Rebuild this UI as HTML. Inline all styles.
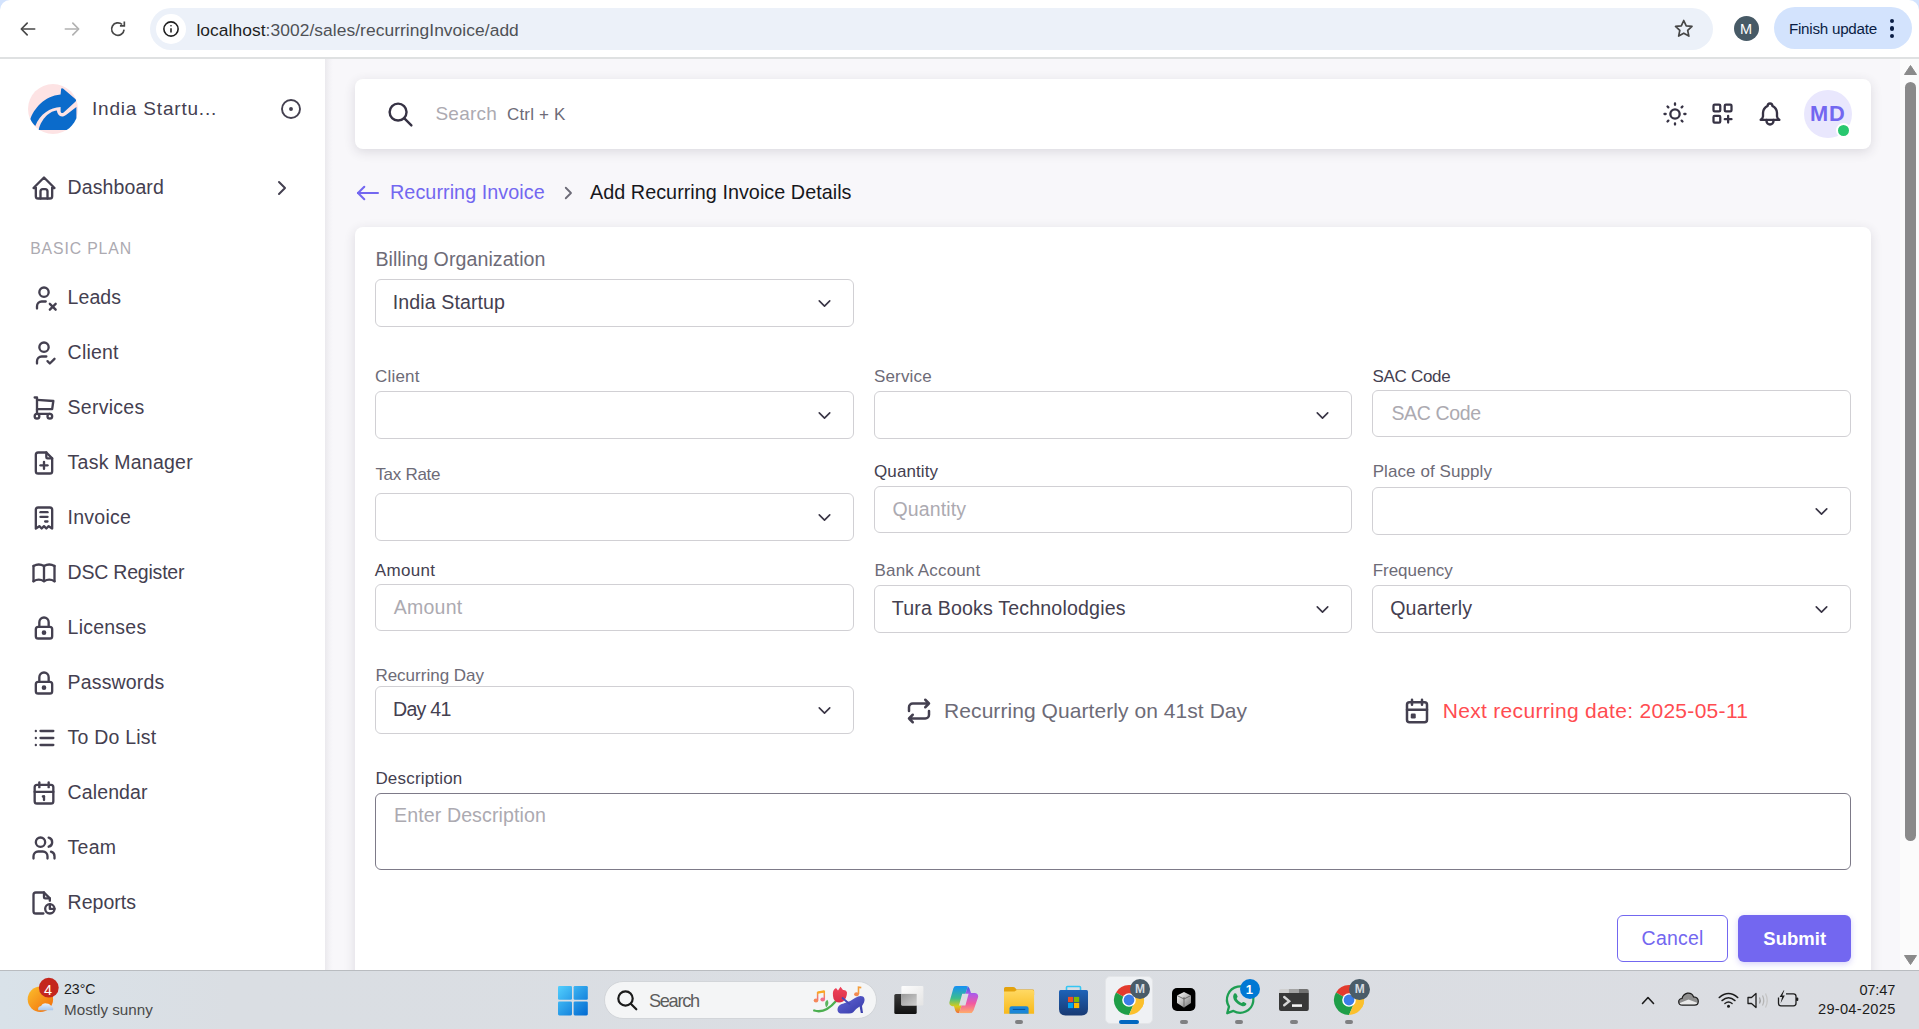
<!DOCTYPE html>
<html><head><meta charset="utf-8"><title>Recurring Invoice</title>
<style>
html,body{margin:0;padding:0;width:1919px;height:1029px;overflow:hidden;background:#fff;font-family:"Liberation Sans",sans-serif;}
.a{position:absolute;box-sizing:border-box;}
.t{position:absolute;white-space:nowrap;font-family:"Liberation Sans",sans-serif;}
svg.a{overflow:visible}
</style></head><body>

<div class="a" style="left:0px;top:0px;width:1919px;height:57px;background:#d3e3fd;"></div>
<div class="a" style="left:0px;top:0px;width:1919px;height:57px;background:#fff;border-radius:10px 10px 0 0;"></div>
<div class="a" style="left:0px;top:57px;width:1919px;height:2px;background:#dfe1e2;"></div>
<svg class="a" style="left:18.00px;top:18.50px" width="20.00" height="20.00" viewBox="0 0 24 24" fill="none" stroke="#474747" stroke-width="2" stroke-linecap="round" stroke-linejoin="round" ><path d="M20 12H5"/><path d="M11 5l-7 7 7 7"/></svg>
<svg class="a" style="left:62.00px;top:18.50px" width="20.00" height="20.00" viewBox="0 0 24 24" fill="none" stroke="#b1b1b1" stroke-width="2" stroke-linecap="round" stroke-linejoin="round" ><path d="M4 12h15"/><path d="M13 5l7 7-7 7"/></svg>
<svg class="a" style="left:107.50px;top:18.50px" width="20.00" height="20.00" viewBox="0 0 24 24" fill="none" stroke="#474747" stroke-width="2" stroke-linecap="round" stroke-linejoin="round" ><path stroke-linecap="butt" d="M19.3 12.8a7.5 7.5 0 1 1-2.4-6.2"/><path stroke-linecap="butt" stroke-linejoin="miter" d="M19.6 3v5.3h-5.3"/></svg>
<div class="a" style="left:150px;top:8px;width:1563px;height:42px;background:#ecf1f9;border-radius:21px;"></div>
<div class="a" style="left:156px;top:14px;width:30px;height:30px;border-radius:15px;background:#fff;"></div>
<svg class="a" style="left:162.00px;top:20.00px" width="18.00" height="18.00" viewBox="0 0 24 24" fill="none" stroke="#1f1f1f" stroke-width="2.1" stroke-linecap="round" stroke-linejoin="round" ><circle cx="12" cy="12" r="9.5"/><path d="M12 11v5.6" stroke-linecap="butt"/><circle cx="12" cy="7.7" r="1.1" fill="#1f1f1f" stroke="none"/></svg>
<div class="t" style="left:196.40px;top:22px;font-size:17.40px;line-height:17.40px;color:#1f1f1f;letter-spacing:0.060px;">localhost<span style="color:#4f5156">:3002/sales/recurringInvoice/add</span></div>
<svg class="a" style="left:1672.85px;top:18.25px" width="21.50" height="21.50" viewBox="0 0 24 24" fill="none" stroke="#474747" stroke-width="1.9" stroke-linecap="round" stroke-linejoin="round" ><path d="M12 2.8l2.75 5.9 6.45.75-4.8 4.4 1.3 6.35L12 16.95l-5.7 3.25 1.3-6.35-4.8-4.4 6.45-.75z"/></svg>
<div class="a" style="left:1734px;top:16px;width:25px;height:25px;border-radius:50%;background:#475a66;"></div>
<div class="t" style="left:1739.90px;top:22px;font-size:14.50px;line-height:14.50px;color:#fff;">M</div>
<div class="a" style="left:1774px;top:7px;width:138px;height:42px;background:#d3e3fd;border-radius:21px;"></div>
<div class="t" style="left:1788.90px;top:21px;font-size:15.20px;line-height:15.20px;color:#0a1d44;letter-spacing:-0.242px;">Finish update</div>
<div class="a" style="left:1889.8px;top:18.9px;width:4.2px;height:4.2px;border-radius:50%;background:#0a1d44;"></div>
<div class="a" style="left:1889.8px;top:26.4px;width:4.2px;height:4.2px;border-radius:50%;background:#0a1d44;"></div>
<div class="a" style="left:1889.8px;top:33.9px;width:4.2px;height:4.2px;border-radius:50%;background:#0a1d44;"></div>
<div class="a" style="left:0px;top:59px;width:325px;height:911px;background:#fff;"></div>
<div class="a" style="left:325px;top:59px;width:1575px;height:911px;background:#f8f7fa;"></div>
<div class="a" style="left:325px;top:59px;width:8px;height:911px;background:linear-gradient(to right, rgba(47,43,61,0.065), rgba(47,43,61,0.02) 60%, rgba(47,43,61,0));"></div>
<div class="a" style="left:1900px;top:59px;width:19px;height:911px;background:#fbfbfb;"></div>
<svg class="a" style="left:1904px;top:65px" width="13" height="10"><path d="M6.5 0.5L12.5 9.5H0.5z" fill="#8a8a8a" stroke="#8a8a8a" stroke-linejoin="round"/></svg>
<div class="a" style="left:1905px;top:82px;width:11px;height:759px;background:#8a8a8a;border-radius:5.5px;"></div>
<svg class="a" style="left:1904px;top:955px" width="13" height="10"><path d="M0.5 0.5H12.5L6.5 9.5z" fill="#8a8a8a" stroke="#8a8a8a" stroke-linejoin="round"/></svg>
<svg class="a" style="left:27.8px;top:83.6px" width="50" height="50" viewBox="0 0 50 50">
<circle cx="25" cy="25" r="25" fill="#fde3e4"/>
<path d="M2.4 34.9 C6 25 16 12 32.6 10.5 L33.1 5.2 Q33.4 3.6 35 4.6 L47.6 15.2 Q48.6 16.4 47.6 17.6 L35.6 28.6 Q33 30 32.6 27.6 L32.6 23 C22 23.5 12 30 7.3 42 C5 39.5 3.2 37 2.4 34.9z" fill="#0b6bcb"/>
<path d="M10.8 45.8 C12 38 20 27 28.8 26.5 C29.5 30 31 32.3 34 32.5 C36 32.6 37 32 48.4 23 L48.4 34.2 C46 40 42 44 38.6 46 L10.8 46z" fill="#0b6bcb"/>
</svg>
<div class="t" style="left:92.00px;top:99px;font-size:19.00px;line-height:19.00px;color:#444050;letter-spacing:0.807px;">India Startu...</div>
<svg class="a" style="left:279.00px;top:97.40px" width="24.00" height="24.00" viewBox="0 0 24 24" fill="none" stroke="#444050" stroke-width="1.9" stroke-linecap="round" stroke-linejoin="round" ><circle cx="12" cy="12" r="9"/><circle cx="12" cy="12" r="1" fill="#444050"/></svg>
<svg class="a" style="left:30.00px;top:174.00px" width="28.00" height="28.00" viewBox="0 0 24 24" fill="none" stroke="#444050" stroke-width="2" stroke-linecap="round" stroke-linejoin="round" ><path d="M5 12H3l9-9 9 9h-2"/><path d="M5 12v7a2 2 0 0 0 2 2h10a2 2 0 0 0 2-2v-7"/><path d="M9 21v-6a2 2 0 0 1 2-2h2a2 2 0 0 1 2 2v6"/></svg>
<div class="t" style="left:67.60px;top:178px;font-size:19.50px;line-height:19.50px;color:#444050;letter-spacing:0.100px;">Dashboard</div>
<svg class="a" style="left:30.00px;top:284.00px" width="28.00" height="28.00" viewBox="0 0 24 24" fill="none" stroke="#444050" stroke-width="2" stroke-linecap="round" stroke-linejoin="round" ><path d="M8 7a4 4 0 1 0 8 0a4 4 0 0 0-8 0"/><path d="M6 21v-2a4 4 0 0 1 4-4h3.5"/><path d="M22 22l-5-5"/><path d="M17 22l5-5"/></svg>
<div class="t" style="left:67.60px;top:288px;font-size:19.50px;line-height:19.50px;color:#444050;letter-spacing:0.075px;">Leads</div>
<svg class="a" style="left:30.00px;top:339.00px" width="28.00" height="28.00" viewBox="0 0 24 24" fill="none" stroke="#444050" stroke-width="2" stroke-linecap="round" stroke-linejoin="round" ><path d="M8 7a4 4 0 1 0 8 0a4 4 0 0 0-8 0"/><path d="M6 21v-2a4 4 0 0 1 4-4h4"/><path d="M15 19l2 2 4-4"/></svg>
<div class="t" style="left:67.60px;top:343px;font-size:19.50px;line-height:19.50px;color:#444050;letter-spacing:0.200px;">Client</div>
<svg class="a" style="left:30.00px;top:394.00px" width="28.00" height="28.00" viewBox="0 0 24 24" fill="none" stroke="#444050" stroke-width="2" stroke-linecap="round" stroke-linejoin="round" ><path d="M6 19m-2 0a2 2 0 1 0 4 0a2 2 0 1 0-4 0"/><path d="M17 19m-2 0a2 2 0 1 0 4 0a2 2 0 1 0-4 0"/><path d="M17 17H6V3H4"/><path d="M6 5l14 1-1 7H6"/></svg>
<div class="t" style="left:67.60px;top:398px;font-size:19.50px;line-height:19.50px;color:#444050;letter-spacing:0.257px;">Services</div>
<svg class="a" style="left:30.00px;top:449.00px" width="28.00" height="28.00" viewBox="0 0 24 24" fill="none" stroke="#444050" stroke-width="2" stroke-linecap="round" stroke-linejoin="round" ><path d="M14 3v4a1 1 0 0 0 1 1h4"/><path d="M17 21H7a2 2 0 0 1-2-2V5a2 2 0 0 1 2-2h7l5 5v11a2 2 0 0 1-2 2z"/><path d="M12 11v6"/><path d="M9 14h6"/></svg>
<div class="t" style="left:67.60px;top:453px;font-size:19.50px;line-height:19.50px;color:#444050;letter-spacing:0.236px;">Task Manager</div>
<svg class="a" style="left:30.00px;top:504.00px" width="28.00" height="28.00" viewBox="0 0 24 24" fill="none" stroke="#444050" stroke-width="2" stroke-linecap="round" stroke-linejoin="round" ><path d="M5 21V5a2 2 0 0 1 2-2h10a2 2 0 0 1 2 2v16l-3-2-2 2-2-2-2 2-2-2-3 2"/><path d="M9 7h6"/><path d="M9 11h6"/><path d="M13 15h2"/></svg>
<div class="t" style="left:67.60px;top:508px;font-size:19.50px;line-height:19.50px;color:#444050;letter-spacing:0.233px;">Invoice</div>
<svg class="a" style="left:30.00px;top:559.00px" width="28.00" height="28.00" viewBox="0 0 24 24" fill="none" stroke="#444050" stroke-width="2" stroke-linecap="round" stroke-linejoin="round" ><path d="M3 19a9 9 0 0 1 9 0a9 9 0 0 1 9 0"/><path d="M3 6a9 9 0 0 1 9 0a9 9 0 0 1 9 0"/><path d="M3 6v13"/><path d="M12 6v13"/><path d="M21 6v13"/></svg>
<div class="t" style="left:67.60px;top:563px;font-size:19.50px;line-height:19.50px;color:#444050;letter-spacing:-0.209px;">DSC Register</div>
<svg class="a" style="left:30.00px;top:614.00px" width="28.00" height="28.00" viewBox="0 0 24 24" fill="none" stroke="#444050" stroke-width="2" stroke-linecap="round" stroke-linejoin="round" ><path d="M5 13a2 2 0 0 1 2-2h10a2 2 0 0 1 2 2v6a2 2 0 0 1-2 2H7a2 2 0 0 1-2-2v-6z"/><path d="M11 16a1 1 0 1 0 2 0a1 1 0 0 0-2 0"/><path d="M8 11V7a4 4 0 1 1 8 0v4"/></svg>
<div class="t" style="left:67.60px;top:618px;font-size:19.50px;line-height:19.50px;color:#444050;letter-spacing:0.229px;">Licenses</div>
<svg class="a" style="left:30.00px;top:669.00px" width="28.00" height="28.00" viewBox="0 0 24 24" fill="none" stroke="#444050" stroke-width="2" stroke-linecap="round" stroke-linejoin="round" ><path d="M5 13a2 2 0 0 1 2-2h10a2 2 0 0 1 2 2v6a2 2 0 0 1-2 2H7a2 2 0 0 1-2-2v-6z"/><path d="M11 16a1 1 0 1 0 2 0a1 1 0 0 0-2 0"/><path d="M8 11V7a4 4 0 1 1 8 0v4"/></svg>
<div class="t" style="left:67.60px;top:673px;font-size:19.50px;line-height:19.50px;color:#444050;letter-spacing:0.162px;">Passwords</div>
<svg class="a" style="left:30.00px;top:724.00px" width="28.00" height="28.00" viewBox="0 0 24 24" fill="none" stroke="#444050" stroke-width="2" stroke-linecap="round" stroke-linejoin="round" ><path d="M9 6h11"/><path d="M9 12h11"/><path d="M9 18h11"/><path d="M5 6v.01"/><path d="M5 12v.01"/><path d="M5 18v.01"/></svg>
<div class="t" style="left:67.60px;top:728px;font-size:19.50px;line-height:19.50px;color:#444050;letter-spacing:0.200px;">To Do List</div>
<svg class="a" style="left:30.00px;top:779.00px" width="28.00" height="28.00" viewBox="0 0 24 24" fill="none" stroke="#444050" stroke-width="2" stroke-linecap="round" stroke-linejoin="round" ><path d="M4 7a2 2 0 0 1 2-2h12a2 2 0 0 1 2 2v12a2 2 0 0 1-2 2H6a2 2 0 0 1-2-2V7z"/><path d="M16 3v4"/><path d="M8 3v4"/><path d="M4 11h16"/><path d="M11 15h1"/><path d="M12 15v3"/></svg>
<div class="t" style="left:67.60px;top:783px;font-size:19.50px;line-height:19.50px;color:#444050;letter-spacing:0.114px;">Calendar</div>
<svg class="a" style="left:30.00px;top:834.00px" width="28.00" height="28.00" viewBox="0 0 24 24" fill="none" stroke="#444050" stroke-width="2" stroke-linecap="round" stroke-linejoin="round" ><path d="M9 7m-4 0a4 4 0 1 0 8 0a4 4 0 1 0-8 0"/><path d="M3 21v-2a4 4 0 0 1 4-4h4a4 4 0 0 1 4 4v2"/><path d="M16 3.13a4 4 0 0 1 0 7.75"/><path d="M21 21v-2a4 4 0 0 0-3-3.85"/></svg>
<div class="t" style="left:67.60px;top:838px;font-size:19.50px;line-height:19.50px;color:#444050;letter-spacing:0.233px;">Team</div>
<svg class="a" style="left:30.00px;top:889.00px" width="28.00" height="28.00" viewBox="0 0 24 24" fill="none" stroke="#444050" stroke-width="2" stroke-linecap="round" stroke-linejoin="round" ><path d="M17 17m-4 0a4 4 0 1 0 8 0a4 4 0 1 0-8 0"/><path d="M17 13v4h4"/><path d="M12 3v4a1 1 0 0 0 1 1h4"/><path d="M11.5 21H5a2 2 0 0 1-2-2V5a2 2 0 0 1 2-2h7l5 5v2"/></svg>
<div class="t" style="left:67.60px;top:893px;font-size:19.50px;line-height:19.50px;color:#444050;letter-spacing:0.033px;">Reports</div>
<svg class="a" style="left:269.50px;top:175.50px" width="24.00" height="24.00" viewBox="0 0 24 24" fill="none" stroke="#444050" stroke-width="2" stroke-linecap="round" stroke-linejoin="round" ><path d="M9 6l6 6-6 6"/></svg>
<div class="t" style="left:30.20px;top:241px;font-size:15.80px;line-height:15.80px;color:#acaab1;letter-spacing:0.867px;">BASIC PLAN</div>
<div class="a" style="left:355px;top:79px;width:1516px;height:70px;background:#fff;border-radius:8px;box-shadow:0 3px 12px rgba(47,43,61,0.14);"></div>
<svg class="a" style="left:385.50px;top:99.50px" width="29.00" height="29.00" viewBox="0 0 24 24" fill="none" stroke="#363244" stroke-width="2" stroke-linecap="round" stroke-linejoin="round" ><path d="M10 10m-7 0a7 7 0 1 0 14 0a7 7 0 1 0-14 0"/><path d="M21 21l-6-6"/></svg>
<div class="t" style="left:435.40px;top:104px;font-size:19.00px;line-height:19.00px;color:#acaab1;letter-spacing:0.260px;">Search</div>
<div class="t" style="left:507.00px;top:106px;font-size:17.00px;line-height:17.00px;color:#6d6b77;letter-spacing:0.157px;">Ctrl + K</div>
<svg class="a" style="left:1661.00px;top:99.80px" width="28.00" height="28.00" viewBox="0 0 24 24" fill="none" stroke="#363244" stroke-width="2" stroke-linecap="round" stroke-linejoin="round" ><path d="M12 12m-4 0a4 4 0 1 0 8 0a4 4 0 1 0-8 0"/><path d="M3 12h1m8-9v1m8 8h1m-9 8v1M5.6 5.6l.7.7m12.1-.7l-.7.7m0 11.4l.7.7m-12.1-.7l-.7.7"/></svg>
<svg class="a" style="left:1708.90px;top:100.10px" width="27.00" height="27.00" viewBox="0 0 24 24" fill="none" stroke="#363244" stroke-width="2" stroke-linecap="round" stroke-linejoin="round" ><path d="M4 5a1 1 0 0 1 1-1h4a1 1 0 0 1 1 1v4a1 1 0 0 1-1 1H5a1 1 0 0 1-1-1z"/><path d="M14 5a1 1 0 0 1 1-1h4a1 1 0 0 1 1 1v4a1 1 0 0 1-1 1h-4a1 1 0 0 1-1-1z"/><path d="M4 15a1 1 0 0 1 1-1h4a1 1 0 0 1 1 1v4a1 1 0 0 1-1 1H5a1 1 0 0 1-1-1z"/><path d="M14 17h6m-3-3v6"/></svg>
<svg class="a" style="left:1756.00px;top:99.80px" width="28.00" height="28.00" viewBox="0 0 24 24" fill="none" stroke="#363244" stroke-width="2" stroke-linecap="round" stroke-linejoin="round" ><path d="M10 5a2 2 0 1 1 4 0a7 7 0 0 1 4 6v3a4 4 0 0 0 2 3H4a4 4 0 0 0 2-3v-3a7 7 0 0 1 4-6"/><path d="M9 17v1a3 3 0 0 0 6 0v-1"/></svg>
<div class="a" style="left:1803.5px;top:89.7px;width:48px;height:48px;border-radius:50%;background:#e9e7fd;"></div>
<div class="t" style="left:1810.00px;top:103px;font-size:21.80px;line-height:21.80px;color:#7367f0;font-weight:700;letter-spacing:0.800px;">MD</div>
<div class="a" style="left:1836.3px;top:123.4px;width:15px;height:15px;border-radius:50%;background:#28c76f;border:2.2px solid #fff;"></div>
<svg class="a" style="left:355.50px;top:180.80px" width="24.00" height="24.00" viewBox="0 0 24 24" fill="none" stroke="#7367f0" stroke-width="2" stroke-linecap="round" stroke-linejoin="round" ><path d="M2 12h20"/><path d="M2 12l6.3 6.3"/><path d="M2 12l6.3-6.3"/></svg>
<div class="t" style="left:390.00px;top:183px;font-size:19.80px;line-height:19.80px;color:#7367f0;letter-spacing:0.050px;">Recurring Invoice</div>
<svg class="a" style="left:559.00px;top:183.50px" width="18.00" height="18.00" viewBox="0 0 24 24" fill="none" stroke="#6d6b77" stroke-width="2.4" stroke-linecap="round" stroke-linejoin="round" ><path d="M9 5l7 7-7 7"/></svg>
<div class="t" style="left:590.00px;top:183px;font-size:19.80px;line-height:19.80px;color:#17171c;letter-spacing:0.032px;">Add Recurring Invoice Details</div>
<div class="a" style="left:355px;top:227px;width:1516px;height:773px;background:#fff;border-radius:8px;box-shadow:0 3px 12px rgba(47,43,61,0.14);"></div>
<div class="t" style="left:375.40px;top:250px;font-size:19.60px;line-height:19.60px;color:#6d6b77;letter-spacing:0.063px;">Billing Organization</div>
<div class="a" style="left:375px;top:279px;width:479px;height:48px;border:1px solid #d1d0d4;border-radius:6px;background:#fff;"></div>
<svg class="a" style="left:813.50px;top:292.50px" width="21.00" height="21.00" viewBox="0 0 24 24" fill="none" stroke="#393545" stroke-width="1.85" stroke-linecap="round" stroke-linejoin="round" ><path d="M6 9l6 6 6-6"/></svg>
<div class="t" style="left:392.70px;top:293px;font-size:19.60px;line-height:19.60px;color:#444050;letter-spacing:0.100px;">India Startup</div>
<div class="t" style="left:375.00px;top:368px;font-size:17.00px;line-height:17.00px;color:#6d6b77;letter-spacing:0.200px;">Client</div>
<div class="t" style="left:874.00px;top:368px;font-size:17.00px;line-height:17.00px;color:#6d6b77;letter-spacing:0.150px;">Service</div>
<div class="t" style="left:1372.40px;top:368px;font-size:17.00px;line-height:17.00px;color:#444050;letter-spacing:-0.286px;">SAC Code</div>
<div class="a" style="left:375px;top:391px;width:479px;height:48px;border:1px solid #d1d0d4;border-radius:6px;background:#fff;"></div>
<svg class="a" style="left:813.50px;top:404.50px" width="21.00" height="21.00" viewBox="0 0 24 24" fill="none" stroke="#393545" stroke-width="1.85" stroke-linecap="round" stroke-linejoin="round" ><path d="M6 9l6 6 6-6"/></svg>
<div class="a" style="left:874px;top:391px;width:478px;height:48px;border:1px solid #d1d0d4;border-radius:6px;background:#fff;"></div>
<svg class="a" style="left:1311.50px;top:404.50px" width="21.00" height="21.00" viewBox="0 0 24 24" fill="none" stroke="#393545" stroke-width="1.85" stroke-linecap="round" stroke-linejoin="round" ><path d="M6 9l6 6 6-6"/></svg>
<div class="a" style="left:1372px;top:390px;width:479px;height:47px;border:1px solid #d1d0d4;border-radius:6px;background:#fff;"></div>
<div class="t" style="left:1391.40px;top:404px;font-size:19.50px;line-height:19.50px;color:#acaab1;letter-spacing:-0.329px;">SAC Code</div>
<div class="t" style="left:375.40px;top:466px;font-size:17.00px;line-height:17.00px;color:#6d6b77;letter-spacing:-0.286px;">Tax Rate</div>
<div class="a" style="left:375px;top:493px;width:479px;height:48px;border:1px solid #d1d0d4;border-radius:6px;background:#fff;"></div>
<svg class="a" style="left:813.50px;top:506.50px" width="21.00" height="21.00" viewBox="0 0 24 24" fill="none" stroke="#393545" stroke-width="1.85" stroke-linecap="round" stroke-linejoin="round" ><path d="M6 9l6 6 6-6"/></svg>
<div class="t" style="left:874.00px;top:463px;font-size:17.00px;line-height:17.00px;color:#444050;letter-spacing:0.100px;">Quantity</div>
<div class="a" style="left:874px;top:486px;width:478px;height:47px;border:1px solid #d1d0d4;border-radius:6px;background:#fff;"></div>
<div class="t" style="left:892.50px;top:500px;font-size:19.50px;line-height:19.50px;color:#acaab1;letter-spacing:0.143px;">Quantity</div>
<div class="t" style="left:1372.70px;top:463px;font-size:17.00px;line-height:17.00px;color:#6d6b77;letter-spacing:0.079px;">Place of Supply</div>
<div class="a" style="left:1372px;top:487px;width:479px;height:48px;border:1px solid #d1d0d4;border-radius:6px;background:#fff;"></div>
<svg class="a" style="left:1810.50px;top:500.50px" width="21.00" height="21.00" viewBox="0 0 24 24" fill="none" stroke="#393545" stroke-width="1.85" stroke-linecap="round" stroke-linejoin="round" ><path d="M6 9l6 6 6-6"/></svg>
<div class="t" style="left:374.80px;top:562px;font-size:17.00px;line-height:17.00px;color:#444050;letter-spacing:0.300px;">Amount</div>
<div class="a" style="left:375px;top:584px;width:479px;height:47px;border:1px solid #d1d0d4;border-radius:6px;background:#fff;"></div>
<div class="t" style="left:393.80px;top:598px;font-size:19.50px;line-height:19.50px;color:#acaab1;letter-spacing:0.240px;">Amount</div>
<div class="t" style="left:874.60px;top:562px;font-size:17.00px;line-height:17.00px;color:#6d6b77;letter-spacing:0.145px;">Bank Account</div>
<div class="a" style="left:874px;top:585px;width:478px;height:48px;border:1px solid #d1d0d4;border-radius:6px;background:#fff;"></div>
<svg class="a" style="left:1311.50px;top:598.50px" width="21.00" height="21.00" viewBox="0 0 24 24" fill="none" stroke="#393545" stroke-width="1.85" stroke-linecap="round" stroke-linejoin="round" ><path d="M6 9l6 6 6-6"/></svg>
<div class="t" style="left:891.80px;top:599px;font-size:19.60px;line-height:19.60px;color:#444050;letter-spacing:0.170px;">Tura Books Technolodgies</div>
<div class="t" style="left:1372.70px;top:562px;font-size:17.00px;line-height:17.00px;color:#6d6b77;letter-spacing:-0.025px;">Frequency</div>
<div class="a" style="left:1372px;top:585px;width:479px;height:48px;border:1px solid #d1d0d4;border-radius:6px;background:#fff;"></div>
<svg class="a" style="left:1810.50px;top:598.50px" width="21.00" height="21.00" viewBox="0 0 24 24" fill="none" stroke="#393545" stroke-width="1.85" stroke-linecap="round" stroke-linejoin="round" ><path d="M6 9l6 6 6-6"/></svg>
<div class="t" style="left:1390.20px;top:599px;font-size:19.60px;line-height:19.60px;color:#444050;letter-spacing:0.163px;">Quarterly</div>
<div class="t" style="left:375.40px;top:667px;font-size:17.00px;line-height:17.00px;color:#6d6b77;">Recurring Day</div>
<div class="a" style="left:375px;top:686px;width:479px;height:48px;border:1px solid #d1d0d4;border-radius:6px;background:#fff;"></div>
<svg class="a" style="left:813.50px;top:699.50px" width="21.00" height="21.00" viewBox="0 0 24 24" fill="none" stroke="#393545" stroke-width="1.85" stroke-linecap="round" stroke-linejoin="round" ><path d="M6 9l6 6 6-6"/></svg>
<div class="t" style="left:393.10px;top:700px;font-size:19.60px;line-height:19.60px;color:#444050;letter-spacing:-0.780px;">Day 41</div>
<svg class="a" style="left:904.00px;top:696.00px" width="30.00" height="30.00" viewBox="0 0 24 24" fill="none" stroke="#444050" stroke-width="2" stroke-linecap="round" stroke-linejoin="round" ><path d="M4 12V9a3 3 0 0 1 3-3h13m-3-3l3 3-3 3"/><path d="M20 12v3a3 3 0 0 1-3 3H4m3 3l-3-3 3-3"/></svg>
<div class="t" style="left:944.10px;top:700px;font-size:21.00px;line-height:21.00px;color:#6d6b77;letter-spacing:0.063px;">Recurring Quarterly on 41st Day</div>
<svg class="a" style="left:1402.20px;top:696.00px" width="30.00" height="30.00" viewBox="0 0 24 24" fill="none" stroke="#444050" stroke-width="2" stroke-linecap="round" stroke-linejoin="round" ><path d="M4 7a2 2 0 0 1 2-2h12a2 2 0 0 1 2 2v12a2 2 0 0 1-2 2H6a2 2 0 0 1-2-2V7z"/><path d="M16 3v4"/><path d="M8 3v4"/><path d="M4 11h16"/><path d="M8 15h2v2H8z"/></svg>
<div class="t" style="left:1442.80px;top:700px;font-size:21.00px;line-height:21.00px;color:#ff4c51;letter-spacing:0.303px;">Next recurring date: 2025-05-11</div>
<div class="t" style="left:375.40px;top:770px;font-size:17.00px;line-height:17.00px;color:#444050;letter-spacing:0.190px;">Description</div>
<div class="a" style="left:375px;top:793px;width:1476px;height:77px;border:1px solid #7d7a88;border-radius:6px;background:#fff;"></div>
<div class="t" style="left:394.10px;top:806px;font-size:19.60px;line-height:19.60px;color:#acaab1;letter-spacing:0.088px;">Enter Description</div>
<div class="a" style="left:1617px;top:915px;width:111px;height:47px;border:1px solid #7367f0;border-radius:6px;background:#fff;"></div>
<div class="t" style="left:1641.60px;top:929px;font-size:19.50px;line-height:19.50px;color:#7367f0;letter-spacing:0.200px;">Cancel</div>
<div class="a" style="left:1738px;top:915px;width:113px;height:47px;background:#7367f0;border-radius:6px;box-shadow:0 2px 6px rgba(115,103,240,0.3);"></div>
<div class="t" style="left:1763.30px;top:930px;font-size:18.50px;line-height:18.50px;color:#fff;font-weight:700;letter-spacing:0.020px;">Submit</div>
<div class="a" style="left:0px;top:970px;width:1919px;height:59px;background:linear-gradient(to right,#d9e2e9 0%,#dadee3 12%,#dbdde2 100%);"></div>
<div class="a" style="left:0px;top:970px;width:1919px;height:1px;background:#b9bcc0;"></div>
<svg class="a" style="left:24px;top:978px" width="40" height="40" viewBox="0 0 40 40">
<defs><linearGradient id="sun" x1="0" y1="0" x2="1" y2="1"><stop offset="0" stop-color="#fbc02d"/><stop offset="1" stop-color="#f26a0a"/></linearGradient>
<linearGradient id="cld" x1="0" y1="0" x2="0" y2="1"><stop offset="0" stop-color="#e6f0fb"/><stop offset="1" stop-color="#a9c6ea"/></linearGradient></defs>
<circle cx="16.4" cy="21.2" r="12.7" fill="url(#sun)"/>
<path d="M14.2 32.2 Q13.5 28.5 17 28 Q18.5 24.6 22.5 25.4 Q26.5 25.6 27.5 28.8 Q30 29.5 29 32.2 Z" fill="url(#cld)"/>
<circle cx="24.8" cy="9.7" r="9.9" fill="#c4261d"/>
</svg>
<div class="t" style="left:44.00px;top:983px;font-size:14.50px;line-height:14.50px;color:#fff;">4</div>
<div class="t" style="left:64.00px;top:982px;font-size:14.20px;line-height:14.20px;color:#1c1c1c;letter-spacing:-0.033px;">23°C</div>
<div class="t" style="left:64.00px;top:1002px;font-size:15.20px;line-height:15.20px;color:#4a4a4a;letter-spacing:0.018px;">Mostly sunny</div>
<svg class="a" style="left:557.5px;top:985.8px" width="30" height="29.5" viewBox="0 0 30 29.5">
<defs><linearGradient id="win" gradientUnits="userSpaceOnUse" x1="0" y1="0" x2="30" y2="29.5"><stop offset="0" stop-color="#52cffe"/><stop offset="1" stop-color="#0069d1"/></linearGradient></defs>
<rect x="0" y="0" width="14" height="13.8" rx="1.3" fill="url(#win)"/>
<rect x="15.6" y="0" width="14.2" height="13.8" rx="1.3" fill="url(#win)"/>
<rect x="0" y="15.4" width="14" height="14" rx="1.3" fill="url(#win)"/>
<rect x="15.6" y="15.4" width="14.2" height="14" rx="1.3" fill="url(#win)"/>
</svg>
<div class="a" style="left:603.8px;top:980.6px;width:273.4000000000001px;height:38.799999999999955px;background:#f4f5f6;border:1px solid #d2d5d9;border-radius:20px;"></div>
<svg class="a" style="left:615.00px;top:988.00px" width="24.00" height="24.00" viewBox="0 0 24 24" fill="none" stroke="#1b1b1b" stroke-width="2.2" stroke-linecap="round" stroke-linejoin="round" ><circle cx="10.5" cy="10.5" r="7.2"/><path d="M15.8 15.8l5.5 5.5"/></svg>
<div class="t" style="left:648.90px;top:992px;font-size:18.20px;line-height:18.20px;color:#5d5d5d;letter-spacing:-1.260px;">Search</div>
<svg class="a" style="left:813px;top:985px" width="56" height="32" viewBox="0 0 56 32">
<defs><linearGradient id="nt" x1="0" y1="0" x2="0" y2="1"><stop offset="0" stop-color="#f9a825"/><stop offset="1" stop-color="#f06292"/></linearGradient>
<linearGradient id="tl" x1="0" y1="0" x2="0" y2="1"><stop offset="0" stop-color="#f0435a"/><stop offset="1" stop-color="#d92f48"/></linearGradient>
<linearGradient id="sh" x1="0" y1="0" x2="1" y2="1"><stop offset="0" stop-color="#6366d6"/><stop offset="1" stop-color="#353aa8"/></linearGradient></defs>
<path d="M4.6 15 V7.6 L11.3 6.4 V14.4" fill="none" stroke="url(#nt)" stroke-width="1.5"/>
<path d="M4.6 7.6 L11.3 6.4" stroke="#f9a825" stroke-width="2.4"/>
<ellipse cx="3" cy="15.4" rx="2.3" ry="2" fill="#f5875a"/><ellipse cx="9.7" cy="14.6" rx="2.3" ry="2" fill="#f0708a"/>
<path d="M1.2 25.5 Q12 29 23 16" fill="none" stroke="#4caf50" stroke-width="2.3" stroke-linecap="round"/>
<path d="M13.2 22.5 Q10.5 17 14.5 14.8 Q16.8 19 13.2 22.5z" fill="#5ab55e"/>
<path d="M20 11 Q19 5 23 3 L25 5.5 L27.5 1.8 L30 5 Q33.5 4.5 34 7.5 Q34 13 30 16.5 Q26 18.5 22.5 16.5 Q20 14.5 20 11z" fill="url(#tl)"/>
<path d="M45.5 9 V2.2 L48.3 2.6" fill="none" stroke="#f59d3a" stroke-width="1.6"/>
<ellipse cx="43.5" cy="9.3" rx="2.4" ry="2" fill="#f28a52"/>
<path d="M24.5 24 Q25 19.5 30.5 18.5 Q37 17 42 13 Q47 10 50 11.6 Q52.5 13.5 51 17.5 L49 21 L50 28 L47.8 28 L46.6 21.5 Q43 23.5 40 27.5 Q38.5 28.4 36 28.4 L27.5 28.4 Q24.3 28 24.5 24z" fill="url(#sh)"/>
<path d="M29.5 13 L36.5 19" stroke="#4448b8" stroke-width="1.8" stroke-linecap="round"/>
</svg>
<svg class="a" style="left:893px;top:985px" width="32" height="30" viewBox="0 0 32 30">
<defs><linearGradient id="tv1" x1="0" y1="0" x2="0" y2="1"><stop offset="0" stop-color="#3a3a3a"/><stop offset="1" stop-color="#111"/></linearGradient>
<linearGradient id="tv2" x1="0" y1="0" x2="1" y2="1"><stop offset="0" stop-color="#fdfdfd"/><stop offset="1" stop-color="#e4e4e4"/></linearGradient>
<linearGradient id="tv3" x1="0" y1="0" x2="1" y2="1"><stop offset="0" stop-color="#9a9a9a"/><stop offset="1" stop-color="#cfcfcf"/></linearGradient></defs>
<rect x="1.3" y="8.9" width="22.4" height="20" rx="1.5" fill="url(#tv1)"/>
<rect x="8.4" y="0.9" width="22" height="19.5" rx="1.2" fill="url(#tv2)"/>
<rect x="8.4" y="8.9" width="15.3" height="11.5" fill="url(#tv3)"/>
</svg>
<svg class="a" style="left:949px;top:985.9px" width="30" height="27.2" viewBox="0 0 30 27.2">
<defs><linearGradient id="cp1" x1="0" y1="0" x2="0" y2="1"><stop offset="0" stop-color="#1590f5"/><stop offset="0.45" stop-color="#3bbd8e"/><stop offset="0.75" stop-color="#d8cc1a"/><stop offset="1" stop-color="#f36b3a"/></linearGradient>
<linearGradient id="cp2" x1="0" y1="0" x2="0" y2="1"><stop offset="0" stop-color="#2a5fe8"/><stop offset="0.3" stop-color="#b05ae8"/><stop offset="0.65" stop-color="#f25aa0"/><stop offset="1" stop-color="#ffae6a"/></linearGradient>
<clipPath id="cpl"><path d="M0 0 L19 0 L10 27.2 L0 27.2z"/></clipPath><clipPath id="cpr"><path d="M19 0 L30 0 L30 27.2 L10 27.2z"/></clipPath></defs>
<path clip-path="url(#cpl)" fill-rule="evenodd" fill="url(#cp1)" d="M7 0 L17 0 Q19.5 0 20.5 2.5 L22 7 L25.5 7 Q30 7.5 29 11.5 L24.5 24.5 Q23.5 27.2 20.5 27.2 L9.5 27.2 Q7 27.2 6.3 24.8 L5 20.2 L3.5 20.2 Q-0.5 19.5 0.6 15.5 L4.3 2.5 Q5 0 7 0z M13.2 7.8 L19.6 7.8 L16.4 19.4 L10 19.4z"/>
<path clip-path="url(#cpr)" fill-rule="evenodd" fill="url(#cp2)" d="M7 0 L17 0 Q19.5 0 20.5 2.5 L22 7 L25.5 7 Q30 7.5 29 11.5 L24.5 24.5 Q23.5 27.2 20.5 27.2 L9.5 27.2 Q7 27.2 6.3 24.8 L5 20.2 L3.5 20.2 Q-0.5 19.5 0.6 15.5 L4.3 2.5 Q5 0 7 0z M13.2 7.8 L19.6 7.8 L16.4 19.4 L10 19.4z"/>
</svg>
<svg class="a" style="left:1003.7px;top:986.8px" width="30.1" height="27" viewBox="0 0 30.1 27">
<defs><linearGradient id="fe" x1="0" y1="0" x2="0" y2="1"><stop offset="0" stop-color="#ffd963"/><stop offset="1" stop-color="#f8b91a"/></linearGradient></defs>
<path d="M0 1.5 Q0 0 1.5 0 L9 0 Q10.5 0 11.5 1.3 L12.5 2.6 L28.6 2.6 Q30.1 2.6 30.1 4 L30.1 8 L0 8z" fill="#e3a20d"/>
<path d="M0 4.5 L10.5 4.5 L12.8 3 L28.6 3 Q30.1 3 30.1 4.5 L30.1 26.8 L0 26.8z" fill="url(#fe)"/>
<path d="M5.5 21.5 Q5.5 19.3 7.7 19.3 L22.4 19.3 Q24.6 19.3 24.6 21.5 L24.6 26.8 L5.5 26.8z" fill="#1a86d8"/>
<path d="M8.8 22.4 L21.3 22.4" stroke="#0b4f94" stroke-width="1"/>
</svg>
<div class="a" style="left:1015.2px;top:1020.1px;width:7.699999999999932px;height:3.6000000000000227px;background:#7f8082;border-radius:2px;"></div>
<svg class="a" style="left:1059px;top:985.9px" width="29" height="29.4" viewBox="0 0 29 29.4">
<defs><linearGradient id="st" x1="0" y1="0" x2="0" y2="1"><stop offset="0" stop-color="#1e63b8"/><stop offset="1" stop-color="#183a74"/></linearGradient></defs>
<path d="M7.5 5 L7.5 1.5 Q7.5 0.5 8.5 0.5 L20.5 0.5 Q21.5 0.5 21.5 1.5 L21.5 5" fill="none" stroke="#35c6f4" stroke-width="1.6"/>
<path d="M0 5.5 Q0 4 1.5 4 L27.5 4 Q29 4 29 5.5 L29 23 Q29 29.4 22.5 29.4 L6.5 29.4 Q0 29.4 0 23z" fill="url(#st)"/>
<rect x="9" y="10.9" width="5.2" height="5.2" fill="#f25022"/><rect x="15" y="10.9" width="5.2" height="5.2" fill="#7fba00"/>
<rect x="9" y="16.9" width="5.2" height="5.2" fill="#00a4ef"/><rect x="15" y="16.9" width="5.2" height="5.2" fill="#ffb900"/>
</svg>
<div class="a" style="left:1105px;top:975.8px;width:48px;height:48.299999999999955px;background:#eff1f4;border:1px solid #e3e5e8;border-radius:5px;"></div>
<svg class="a" style="left:1114.20px;top:984.70px" width="30.00" height="30.00" viewBox="-15 -15 30 30">
<path d="M0 -15 A15 15 0 0 1 13 7.5 L5.2 3 A6 6 0 0 0 0 -6 z" fill="#fbc02d"/>
<path d="M0 -15 A15 15 0 0 0 -13 -7.5 L-5.2 -3 A6 6 0 0 1 0 -6 L13 -7.5 A15 15 0 0 0 0 -15z" fill="#e33b2e"/>
<path d="M-13 -7.5 A15 15 0 0 0 0 15 L5.2 3 A6 6 0 0 1 -5.2 -3z" fill="#1e9e48"/>
<path d="M0 15 A15 15 0 0 0 15 0 A15 15 0 0 0 13 -7.5 L0 -6 A6 6 0 0 1 5.2 3z" fill="#fbc02d"/>
<circle cx="0" cy="0" r="6.8" fill="#fff"/><circle cx="0" cy="0" r="5.4" fill="#3b7de8"/>
</svg>
<div class="a" style="left:1129.60px;top:979.00px;width:20.40px;height:20.40px;border-radius:50%;background:#4a5c68;"></div>
<div class="t" style="left:1135.00px;top:983px;font-size:12.00px;line-height:12.00px;color:#d5dbe0;font-weight:700;">M</div>
<div class="a" style="left:1119.2px;top:1019.9px;width:19.59999999999991px;height:3.800000000000068px;background:#0067c0;border-radius:2px;"></div>
<svg class="a" style="left:1172px;top:988.2px" width="23.4" height="23" viewBox="0 0 23.4 23">
<defs><linearGradient id="cb" x1="0" y1="0" x2="1" y2="1"><stop offset="0" stop-color="#fff"/><stop offset="1" stop-color="#777"/></linearGradient></defs>
<rect x="0" y="0" width="23.4" height="23" rx="5" fill="#000"/>
<path d="M5 7.5 L12 4 L19 7.5 L19 15 L12 19.5 L5 15z" fill="url(#cb)"/>
<path d="M12 9 L12 19.5 M5 7.5 L12 11 L19 7.5" stroke="#555" stroke-width="0.8" fill="none"/>
</svg>
<div class="a" style="left:1180px;top:1020.2px;width:8px;height:3.5px;background:#7f8082;border-radius:2px;"></div>
<svg class="a" style="left:1223.7px;top:984.9px" width="30" height="30" viewBox="0 0 30 30">
<path d="M3.2 28.2 L5 21.6 A13.2 13.2 0 1 1 9.4 25.9 Z" fill="none" stroke="#1e9e52" stroke-width="2.3" stroke-linejoin="round"/>
<path d="M10.2 8.6 Q11.5 7.6 12.3 8.8 L13.6 11.2 Q13.8 12 13 12.8 Q12.5 13.3 13 14.2 Q14.6 16.7 17 17.8 Q17.8 18.2 18.3 17.5 Q19 16.6 19.8 17 L22 18.2 Q22.9 18.9 22 20 Q20.5 21.6 18.5 21.2 Q13.5 20 10 15 Q8.2 11.2 10.2 8.6z" fill="#1e9e52"/>
</svg>
<div class="a" style="left:1239.60px;top:978.90px;width:20.00px;height:20.00px;border-radius:50%;background:#0078d4;"></div>
<div class="t" style="left:1245.70px;top:983px;font-size:13.00px;line-height:13.00px;color:#fff;font-weight:700;">1</div>
<div class="a" style="left:1235px;top:1020.2px;width:8px;height:3.5px;background:#7f8082;border-radius:2px;"></div>
<svg class="a" style="left:1279px;top:988.9px" width="29.8" height="21.9" viewBox="0 0 29.8 21.9">
<path d="M0 2 Q0 0 2 0 L9.9 0 L9.9 4.1 L0 4.1z" fill="#cfcfcf"/>
<rect x="9.9" y="0" width="9.9" height="4.1" fill="#a3a3a3"/>
<path d="M19.8 0 L27.8 0 Q29.8 0 29.8 2 L29.8 4.1 L19.8 4.1z" fill="#727272"/>
<path d="M0 4.1 L29.8 4.1 L29.8 19.9 Q29.8 21.9 27.8 21.9 L2 21.9 Q0 21.9 0 19.9z" fill="#383838"/>
<path d="M5.2 8 L10.2 12.2 L5.2 16.3" fill="none" stroke="#d6d6d6" stroke-width="2.4" stroke-linecap="round"/>
<rect x="13" y="15.3" width="10" height="2.6" fill="#f2f2f2"/>
</svg>
<div class="a" style="left:1290px;top:1020.1px;width:7.7999999999999545px;height:3.7999999999999545px;background:#7f8082;border-radius:2px;"></div>
<svg class="a" style="left:1333.90px;top:985.00px" width="30.00" height="30.00" viewBox="-15 -15 30 30">
<path d="M0 -15 A15 15 0 0 1 13 7.5 L5.2 3 A6 6 0 0 0 0 -6 z" fill="#fbc02d"/>
<path d="M0 -15 A15 15 0 0 0 -13 -7.5 L-5.2 -3 A6 6 0 0 1 0 -6 L13 -7.5 A15 15 0 0 0 0 -15z" fill="#e33b2e"/>
<path d="M-13 -7.5 A15 15 0 0 0 0 15 L5.2 3 A6 6 0 0 1 -5.2 -3z" fill="#1e9e48"/>
<path d="M0 15 A15 15 0 0 0 15 0 A15 15 0 0 0 13 -7.5 L0 -6 A6 6 0 0 1 5.2 3z" fill="#fbc02d"/>
<circle cx="0" cy="0" r="6.8" fill="#fff"/><circle cx="0" cy="0" r="5.4" fill="#3b7de8"/>
</svg>
<div class="a" style="left:1349.10px;top:978.80px;width:20.80px;height:20.80px;border-radius:50%;background:#4a5c68;"></div>
<div class="t" style="left:1354.80px;top:983px;font-size:12.00px;line-height:12.00px;color:#d5dbe0;font-weight:700;">M</div>
<div class="a" style="left:1345px;top:1020.1px;width:7.7999999999999545px;height:3.7999999999999545px;background:#7f8082;border-radius:2px;"></div>
<svg class="a" style="left:1640.20px;top:991.50px" width="16.00" height="16.00" viewBox="0 0 16 16" fill="none" stroke="#1c1c1c" stroke-width="1.6" stroke-linecap="round" stroke-linejoin="round" ><path d="M2.5 11.5L8 5.5l5.5 6"/></svg>
<svg class="a" style="left:1677.5px;top:992px" width="21" height="14" viewBox="0 0 21 14">
<defs><clipPath id="cl1"><path d="M0 0 L21 0 L21 11.5 L10.5 7.4 L0 11.8z"/></clipPath></defs>
<path d="M4.5 13.2 Q0.7 13.2 0.7 9.8 Q0.7 6.8 4 6.5 Q5 2.2 9.5 1.2 Q14 0.8 15.5 4.8 Q20.3 5 20.3 9.3 Q20.3 13.2 16.5 13.2z" fill="#e9e9e9"/>
<path clip-path="url(#cl1)" d="M4.5 13.2 Q0.7 13.2 0.7 9.8 Q0.7 6.8 4 6.5 Q5 2.2 9.5 1.2 Q14 0.8 15.5 4.8 Q20.3 5 20.3 9.3 Q20.3 13.2 16.5 13.2z" fill="#8e8e8e"/>
<path d="M4.5 13.2 Q0.7 13.2 0.7 9.8 Q0.7 6.8 4 6.5 Q5 2.2 9.5 1.2 Q14 0.8 15.5 4.8 Q20.3 5 20.3 9.3 Q20.3 13.2 16.5 13.2z" fill="none" stroke="#1c1c1c" stroke-width="1.2"/>
</svg>
<svg class="a" style="left:1717.5px;top:991.5px" width="21" height="16" viewBox="0 0 21 16">
<path d="M1.2 5.6 Q10.5 -2.4 19.8 5.6" fill="none" stroke="#1c1c1c" stroke-width="1.4" stroke-linecap="round"/>
<path d="M4 8.6 Q10.5 3 17 8.6" fill="none" stroke="#1c1c1c" stroke-width="1.4" stroke-linecap="round"/>
<path d="M6.9 11.5 Q10.5 8.4 14.1 11.5" fill="none" stroke="#1c1c1c" stroke-width="1.4" stroke-linecap="round"/>
<circle cx="10.5" cy="14.2" r="1.5" fill="#1c1c1c"/>
</svg>
<svg class="a" style="left:1747px;top:991.5px" width="22" height="17" viewBox="0 0 22 17">
<path d="M1 5.5 L4.5 5.5 L9 1.5 L9 15.5 L4.5 11.5 L1 11.5z" fill="none" stroke="#1c1c1c" stroke-width="1.3" stroke-linejoin="round"/>
<path d="M12.5 5.5 Q14 8.5 12.5 11.5" fill="none" stroke="#9a9a9a" stroke-width="1.2"/>
<path d="M15.5 3.5 Q18 8.5 15.5 13.5" fill="none" stroke="#b5b5b5" stroke-width="1.2"/>
<path d="M18.5 1.5 Q22 8.5 18.5 15.5" fill="none" stroke="#c5c5c5" stroke-width="1.2"/>
</svg>
<svg class="a" style="left:1777px;top:990px" width="23" height="17" viewBox="0 0 23 17">
<path d="M9 3.8 L16.5 3.8 Q19 3.8 19 6.3 L19 13.3 Q19 15.8 16.5 15.8 L4 15.8 Q1.5 15.8 1.5 13.3 L1.5 7.5" fill="none" stroke="#1c1c1c" stroke-width="1.3"/>
<path d="M6.8 0.2 L2.6 7 L5.1 7 L3.6 13.2 L7.8 5.6 L5.3 5.6 L7.3 0.2z" fill="#1c1c1c"/>
<rect x="19" y="7.4" width="2.3" height="3.6" rx="1" fill="#1c1c1c"/>
</svg>
<div class="t" style="left:1859.40px;top:983px;font-size:14.60px;line-height:14.60px;color:#1c1c1c;letter-spacing:-0.150px;">07:47</div>
<div class="t" style="left:1818.00px;top:1002px;font-size:14.60px;line-height:14.60px;color:#1c1c1c;letter-spacing:0.289px;">29-04-2025</div>
</body></html>
